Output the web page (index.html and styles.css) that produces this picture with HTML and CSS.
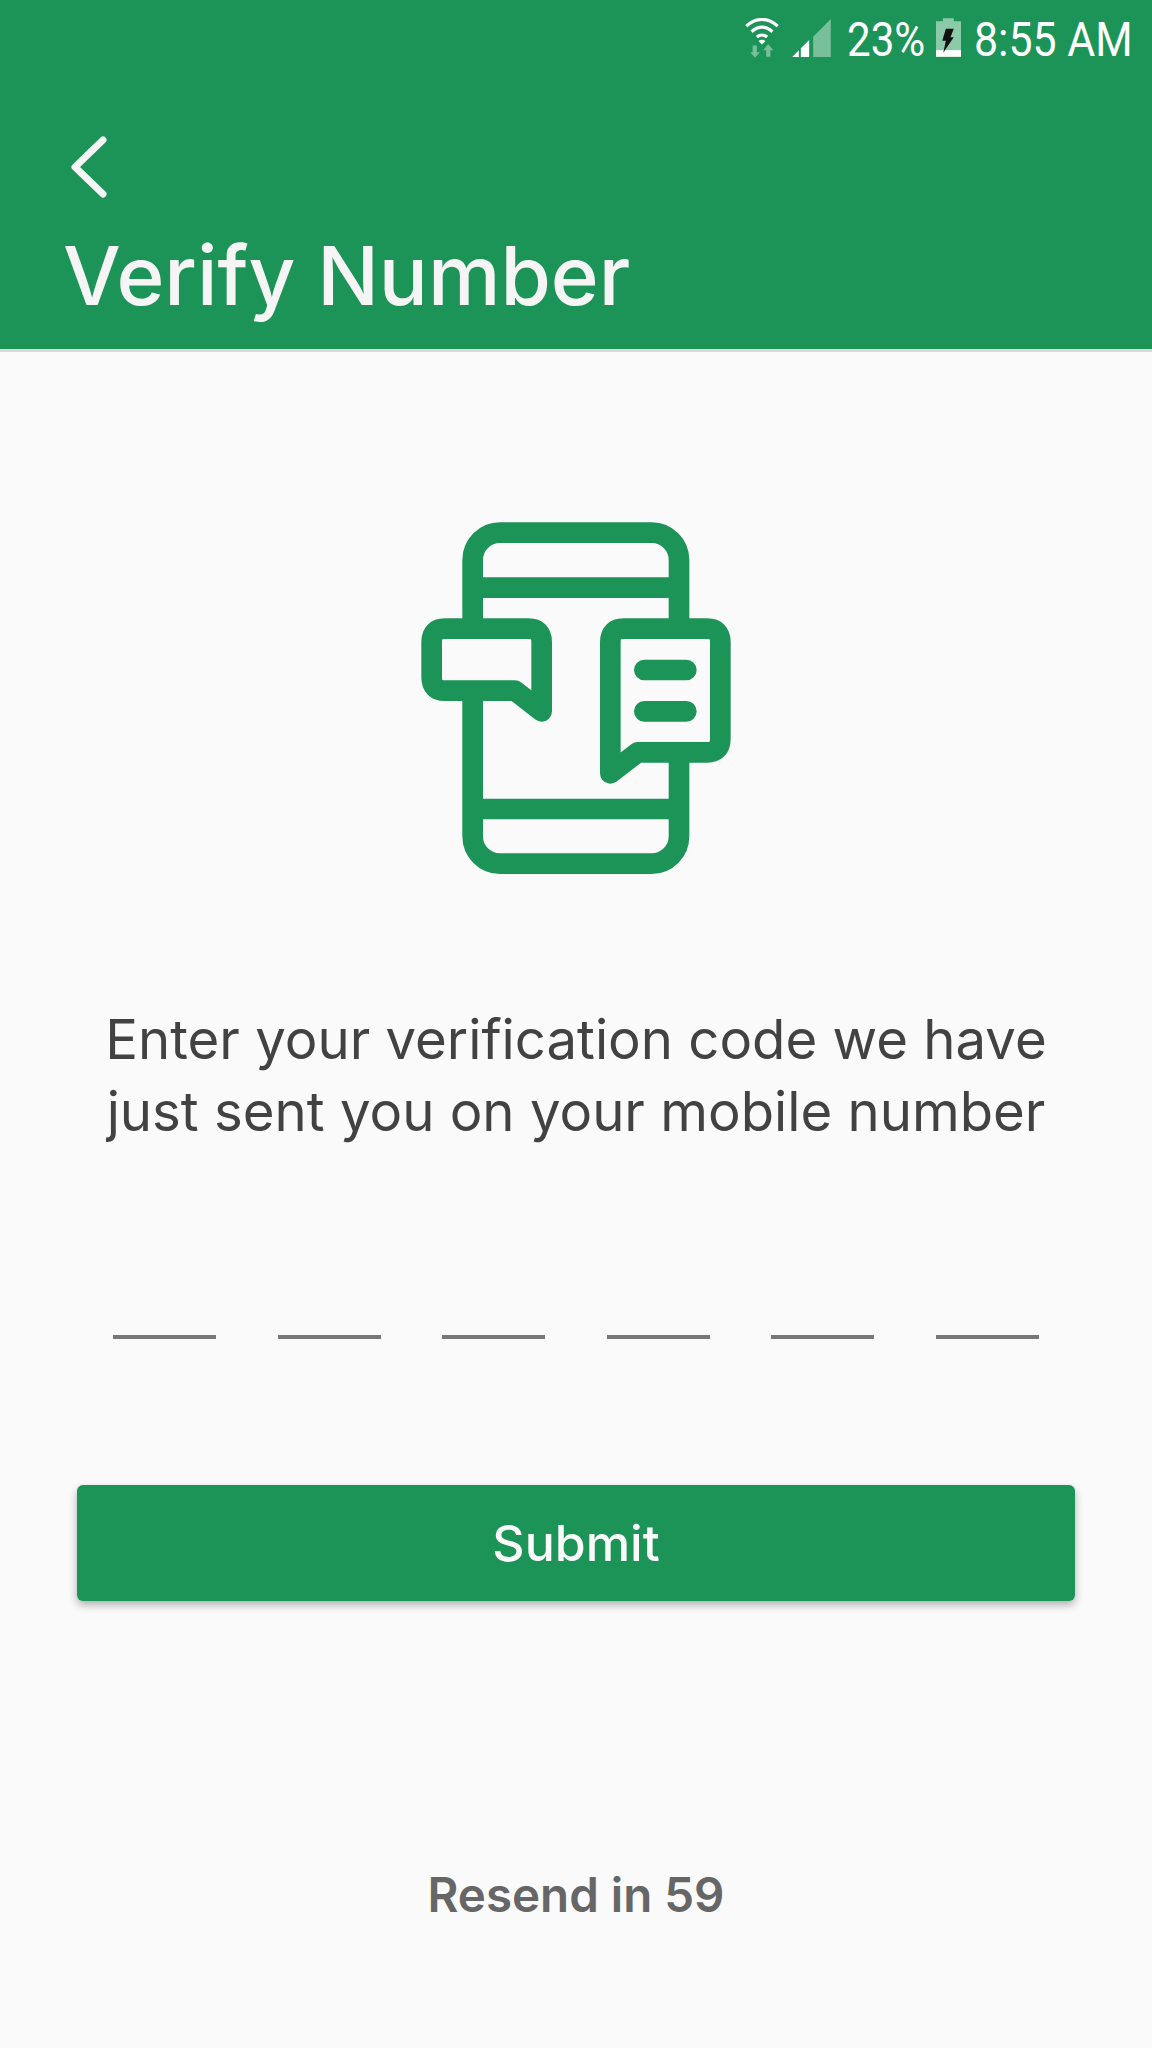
FILE: index.html
```html
<!DOCTYPE html>
<html lang="en">
<head>
    <meta charset="UTF-8">
    <meta name="viewport" content="width=device-width, initial-scale=1.0">
    <title>Verify Number</title>
    <link rel="stylesheet" href="styles.css">
</head>
<body>
    <header class="topbar">
        <div class="status">
            <svg class="wifi" viewBox="0 0 103 120">
                <path d="M4 24C34 -3 69 -3 99 24M20 41C40 23 63 23 83 41M36 57C45 49 58 49 67 57" fill="none" stroke="#fff" stroke-width="10"/>
                <path d="M41 69L51 80L62 69C56 64 47 64 41 69Z" fill="#fff"/>
                <path d="M23 83H36V103H45L30 120L16 103H23ZM64 117H77V97H86L70 78L55 97H64Z" fill="#77c09b"/>
            </svg>
            <svg class="signal" viewBox="0 0 116 114">
                <path d="M116 0V114H63V53Z" fill="#77c09b"/>
                <path d="M0 114L20 94V114ZM26 88L51 63V114H26Z" fill="#fff"/>
            </svg>
            <span class="status-text pct">23%</span>
            <svg class="battery" viewBox="0 0 76 117">
                <path d="M21 0H54V9H76V117H0V9H21Z" fill="#8ccba9"/>
                <path d="M0 97H76V117H0Z" fill="#fff"/>
                <path d="M30 32H54L44 58H54L22 105L30 68H19Z" fill="#111"/>
            </svg>
            <span class="status-text time">8:55 AM</span>
        </div>
        <svg class="back" viewBox="0 0 36 62">
            <path d="M32 4L4 31L32 58" fill="none" stroke="#f5f5f5" stroke-width="7" stroke-linecap="round" stroke-linejoin="round"/>
        </svg>
        <h1>Verify Number</h1>
    </header>

    <main class="content">
        <svg class="phone" viewBox="0 0 1056 1200">
            <g fill="none" stroke="#1c9357" stroke-width="62" stroke-linejoin="round" stroke-linecap="round">
                <rect x="218" y="98" width="619" height="993" rx="82"/>
                <path d="M218 263H837M218 927H837" stroke-linecap="butt"/>
                <path d="M135 386H385Q425 386 425 426V634L345 572H135Q95 572 95 532V426Q95 386 135 386Z" fill="#fafafa"/>
                <path d="M671 386H921Q961 386 961 426V717Q961 757 921 757H713L631 820V426Q631 386 671 386Z" fill="#fafafa"/>
                <path d="M733 510H859M733 634H859"/>
            </g>
        </svg>
        <p class="message">Enter your verification code we have<br>just sent you on your mobile number</p>
        <div class="code">
            <span></span>
            <span></span>
            <span></span>
            <span></span>
            <span></span>
            <span></span>
        </div>
        <button class="submit">Submit</button>
        <p class="resend">Resend in 59</p>
    </main>
</body>
</html>
```

FILE: styles.css
```css
html, body {
    margin: 0;
    padding: 0;
}
body {
    width: 1152px;
    height: 2048px;
    overflow: hidden;
    background-color: #fafafa;
    font-family: Inter, Lato, sans-serif;
    font-variant-ligatures: none;
}
.topbar {
    height: 349px;
    box-sizing: border-box;
    background-color: #1c9357;
    box-shadow: 0 3px 0 #d8d8d8;
    padding: 18px 23px 0 65px;
}
.status {
    display: flex;
    justify-content: flex-end;
    align-items: flex-start;
    height: 44px;
}
.status svg {
    display: block;
}
.wifi {
    width: 34px;
    height: 40px;
    margin-right: 13px;
}
.signal {
    width: 39px;
    height: 38px;
    margin-top: 1px;
    margin-right: 16px;
}
.battery {
    width: 25px;
    height: 39px;
    margin-left: 13px;
    margin-right: 13px;
}
.status-text {
    font-family: Roboto, sans-serif;
    font-size: 48px;
    line-height: 44px;
    color: #fff;
    white-space: nowrap;
    transform-origin: left center;
}
.pct {
    width: 76px;
    transform: scaleX(0.878);
}
.time {
    width: 155px;
    transform: scaleX(0.893);
}
.back {
    display: block;
    width: 36px;
    height: 62px;
    margin: 74px 0 0 6px;
}
h1 {
    margin: 0 0 0 -2px;
    padding-top: 28px;
    font-size: 81.6px;
    line-height: 100px;
    font-weight: 500;
    color: #f5f5f5;
}
.content {
    display: flex;
    flex-direction: column;
    align-items: center;
}
.phone {
    display: block;
    width: 352px;
    height: 400px;
    margin-top: 151px;
}
.message {
    margin: 103px 0 0;
    font-size: 54.5px;
    line-height: 72px;
    text-align: center;
    color: #424242;
}
.code {
    display: flex;
    justify-content: space-between;
    width: 926px;
    margin-top: 188px;
}
.code span {
    width: 103px;
    height: 4px;
    background-color: #777;
}
.submit {
    width: 998px;
    height: 116px;
    margin-top: 146px;
    background-color: #1c9357;
    color: #fafafa;
    border: none;
    border-radius: 6px;
    box-shadow: 0 4px 8px rgba(0, 0, 0, 0.3);
    font-family: inherit;
    font-size: 50px;
    font-weight: 500;
}
.resend {
    margin: 264px 0 0;
    font-size: 47.5px;
    font-weight: 600;
    line-height: 60px;
    color: #666;
}
```
